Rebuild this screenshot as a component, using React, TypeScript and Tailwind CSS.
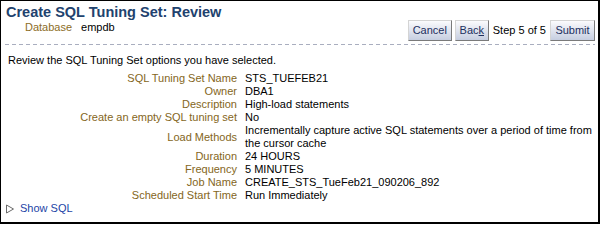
import React from "react";

const rows: { label: string; value: React.ReactNode; tall?: boolean }[] = [
  { label: "SQL Tuning Set Name", value: "STS_TUEFEB21" },
  { label: "Owner", value: "DBA1" },
  { label: "Description", value: "High-load statements" },
  { label: "Create an empty SQL tuning set", value: "No" },
  {
    label: "Load Methods",
    value: (
      <>
        Incrementally capture active SQL statements over a period of time from
        <br />
        the cursor cache
      </>
    ),
    tall: true,
  },
  { label: "Duration", value: "24 HOURS" },
  { label: "Frequency", value: "5 MINUTES" },
  { label: "Job Name", value: "CREATE_STS_TueFeb21_090206_892" },
  { label: "Scheduled Start Time", value: "Run Immediately" },
];

function Btn({ children, w }: { children: React.ReactNode; w: string }) {
  return (
    <button
      className={`${w} h-[21px] flex items-center justify-center border border-t-[#d4d4d4] border-l-[#d4d4d4] border-r-[#7a7a7a] border-b-[#7a7a7a] bg-linear-to-b from-[#fbfbfd] to-[#c6cee0] text-[#1c2f5e] text-[11px] leading-[13px]`}
    >
      {children}
    </button>
  );
}

export default function App() {
  return (
    <div
      className="w-[600px] h-[224px] bg-white border-t border-l border-r-2 border-b-2 border-black text-[11px] leading-[13px] text-black overflow-hidden"
      style={{ fontFamily: '"Liberation Sans", Arial, sans-serif' }}
    >
      <div className="flex justify-between pl-[5px] pr-[3px]">
        <div className="pt-[3px]">
          <div className="text-[14.5px] leading-[17px] font-bold text-[#21426e]">
            Create SQL Tuning Set: Review
          </div>
          <div className="flex pl-[19px] leading-[12px]">
            <span className="text-[#8c6d1f]">Database</span>
            <span className="ml-[9px]">empdb</span>
          </div>
        </div>
        <div className="pt-[19px] flex items-center">
          <Btn w="w-[44px]">Cancel</Btn>
          <div className="w-[3px]" />
          <Btn w="w-[34px]">
            <span>
              Bac<span className="underline">k</span>
            </span>
          </Btn>
          <span className="mx-[4px] text-black">Step 5 of 5</span>
          <Btn w="w-[45px]">Submit</Btn>
        </div>
      </div>
      <div className="mx-[4px] mr-[3px] mt-[3px] h-px bg-[repeating-linear-gradient(to_right,#a9aebf_0_4px,transparent_4px_7px)]" />
      <div className="pl-[7px] mt-[9px]">Review the SQL Tuning Set options you have selected.</div>
      <div className="mt-[5px]">
        {rows.map((r) => (
          <div key={r.label} className="flex items-center">
            <div className="w-[236px] shrink-0 text-right text-[#846622]">{r.label}</div>
            <div className="ml-[8px]">{r.value}</div>
          </div>
        ))}
      </div>
      <div className="flex items-center pl-[4px]">
        <svg width="10" height="10" viewBox="0 0 10 10" className="shrink-0">
          <path d="M1.5 1 L8.5 5 L1.5 9 Z" fill="none" stroke="#6b6b6b" strokeWidth="1" />
        </svg>
        <span className="ml-[5px] text-[#2344a6]">Show SQL</span>
      </div>
    </div>
  );
}
